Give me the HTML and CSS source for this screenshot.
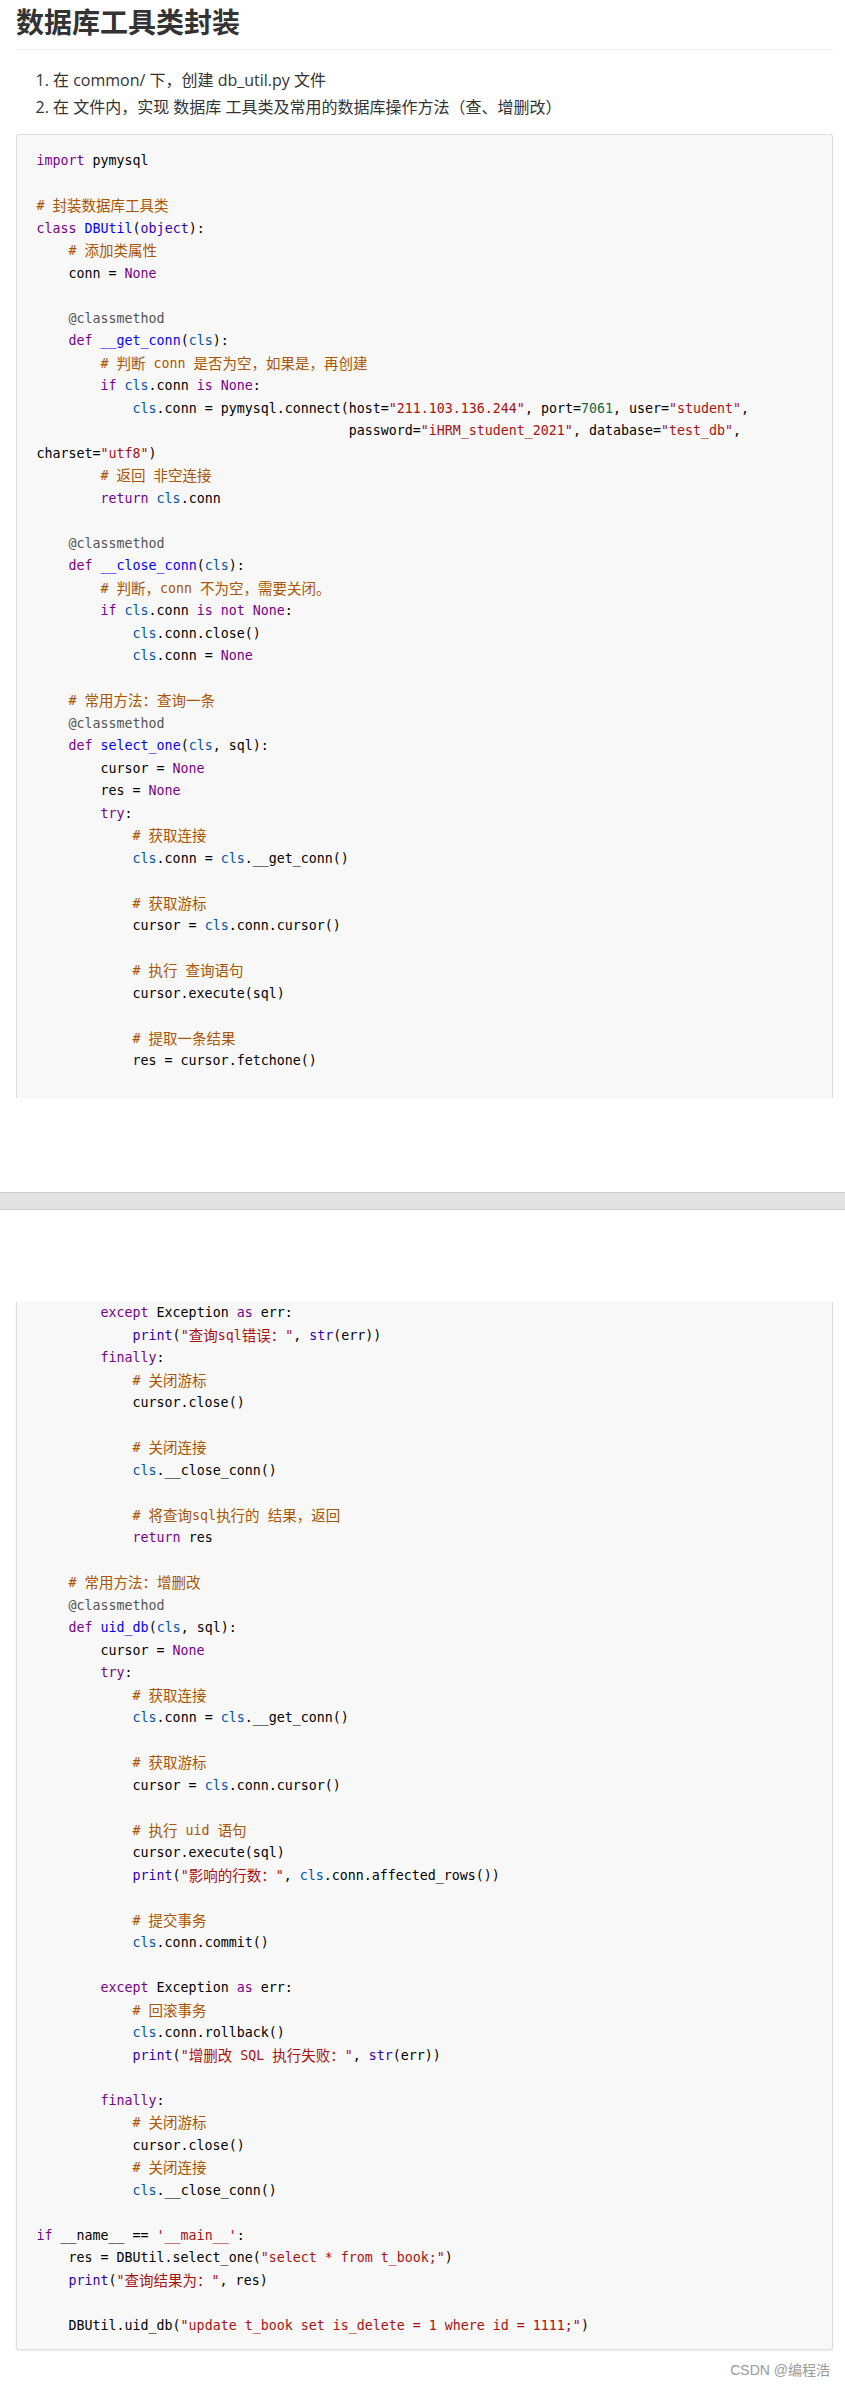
FILE: index.html
```html
<!DOCTYPE html>
<html lang="zh-CN">
<head>
    <meta charset="UTF-8">
    <meta name="viewport" content="width=device-width, initial-scale=1.0">
    <title>数据库工具类封装</title>
    <link rel="stylesheet" href="styles.css">
</head>
<body>
    <div class="sheet">
        <h2>数据库工具类封装</h2>
        <ol class="steps">
            <li>在 common/ 下，创建 db_util.py 文件</li>
            <li>在 文件内，实现 数据库 工具类及常用的数据库操作方法（查、增删改）</li>
        </ol>
        <div class="code code-top">
<div class="ln"><span class="k">import</span> pymysql</div>
<div class="ln"></div>
<div class="ln"><span class="c"># <span class="z">封装数据库工具类</span></span></div>
<div class="ln"><span class="k">class</span> <span class="d">DBUtil</span>(<span class="b">object</span>):</div>
<div class="ln">    <span class="c"># <span class="z">添加类属性</span></span></div>
<div class="ln">    conn = <span class="k">None</span></div>
<div class="ln"></div>
<div class="ln">    <span class="m">@classmethod</span></div>
<div class="ln">    <span class="k">def</span> <span class="d">__get_conn</span>(<span class="v">cls</span>):</div>
<div class="ln">        <span class="c"># <span class="z">判断</span> conn <span class="z">是否为空，如果是，再创建</span></span></div>
<div class="ln">        <span class="k">if</span> <span class="v">cls</span>.conn <span class="k">is</span> <span class="k">None</span>:</div>
<div class="ln">            <span class="v">cls</span>.conn = pymysql.connect(host=<span class="s">"211.103.136.244"</span>, port=<span class="n">7061</span>, user=<span class="s">"student"</span>,</div>
<div class="ln">                                       password=<span class="s">"iHRM_student_2021"</span>, database=<span class="s">"test_db"</span>,</div>
<div class="ln">charset=<span class="s">"utf8"</span>)</div>
<div class="ln">        <span class="c"># <span class="z">返回</span> <span class="z">非空连接</span></span></div>
<div class="ln">        <span class="k">return</span> <span class="v">cls</span>.conn</div>
<div class="ln"></div>
<div class="ln">    <span class="m">@classmethod</span></div>
<div class="ln">    <span class="k">def</span> <span class="d">__close_conn</span>(<span class="v">cls</span>):</div>
<div class="ln">        <span class="c"># <span class="z">判断，</span>conn <span class="z">不为空，需要关闭。</span></span></div>
<div class="ln">        <span class="k">if</span> <span class="v">cls</span>.conn <span class="k">is</span> <span class="k">not</span> <span class="k">None</span>:</div>
<div class="ln">            <span class="v">cls</span>.conn.close()</div>
<div class="ln">            <span class="v">cls</span>.conn = <span class="k">None</span></div>
<div class="ln"></div>
<div class="ln">    <span class="c"># <span class="z">常用方法：查询一条</span></span></div>
<div class="ln">    <span class="m">@classmethod</span></div>
<div class="ln">    <span class="k">def</span> <span class="d">select_one</span>(<span class="v">cls</span>, sql):</div>
<div class="ln">        cursor = <span class="k">None</span></div>
<div class="ln">        res = <span class="k">None</span></div>
<div class="ln">        <span class="k">try</span>:</div>
<div class="ln">            <span class="c"># <span class="z">获取连接</span></span></div>
<div class="ln">            <span class="v">cls</span>.conn = <span class="v">cls</span>.__get_conn()</div>
<div class="ln"></div>
<div class="ln">            <span class="c"># <span class="z">获取游标</span></span></div>
<div class="ln">            cursor = <span class="v">cls</span>.conn.cursor()</div>
<div class="ln"></div>
<div class="ln">            <span class="c"># <span class="z">执行</span> <span class="z">查询语句</span></span></div>
<div class="ln">            cursor.execute(sql)</div>
<div class="ln"></div>
<div class="ln">            <span class="c"># <span class="z">提取一条结果</span></span></div>
<div class="ln">            res = cursor.fetchone()</div>
        </div>
    </div>

    <div class="pagebreak"></div>

    <div class="sheet">
        <div class="code code-bottom">
<div class="ln">        <span class="k">except</span> Exception <span class="k">as</span> err:</div>
<div class="ln">            <span class="b">print</span>(<span class="s">"<span class="z">查询</span>sql<span class="z">错误：</span>"</span>, <span class="b">str</span>(err))</div>
<div class="ln">        <span class="k">finally</span>:</div>
<div class="ln">            <span class="c"># <span class="z">关闭游标</span></span></div>
<div class="ln">            cursor.close()</div>
<div class="ln"></div>
<div class="ln">            <span class="c"># <span class="z">关闭连接</span></span></div>
<div class="ln">            <span class="v">cls</span>.__close_conn()</div>
<div class="ln"></div>
<div class="ln">            <span class="c"># <span class="z">将查询</span>sql<span class="z">执行的</span> <span class="z">结果，返回</span></span></div>
<div class="ln">            <span class="k">return</span> res</div>
<div class="ln"></div>
<div class="ln">    <span class="c"># <span class="z">常用方法：增删改</span></span></div>
<div class="ln">    <span class="m">@classmethod</span></div>
<div class="ln">    <span class="k">def</span> <span class="d">uid_db</span>(<span class="v">cls</span>, sql):</div>
<div class="ln">        cursor = <span class="k">None</span></div>
<div class="ln">        <span class="k">try</span>:</div>
<div class="ln">            <span class="c"># <span class="z">获取连接</span></span></div>
<div class="ln">            <span class="v">cls</span>.conn = <span class="v">cls</span>.__get_conn()</div>
<div class="ln"></div>
<div class="ln">            <span class="c"># <span class="z">获取游标</span></span></div>
<div class="ln">            cursor = <span class="v">cls</span>.conn.cursor()</div>
<div class="ln"></div>
<div class="ln">            <span class="c"># <span class="z">执行</span> uid <span class="z">语句</span></span></div>
<div class="ln">            cursor.execute(sql)</div>
<div class="ln">            <span class="b">print</span>(<span class="s">"<span class="z">影响的行数：</span>"</span>, <span class="v">cls</span>.conn.affected_rows())</div>
<div class="ln"></div>
<div class="ln">            <span class="c"># <span class="z">提交事务</span></span></div>
<div class="ln">            <span class="v">cls</span>.conn.commit()</div>
<div class="ln"></div>
<div class="ln">        <span class="k">except</span> Exception <span class="k">as</span> err:</div>
<div class="ln">            <span class="c"># <span class="z">回滚事务</span></span></div>
<div class="ln">            <span class="v">cls</span>.conn.rollback()</div>
<div class="ln">            <span class="b">print</span>(<span class="s">"<span class="z">增删改</span> SQL <span class="z">执行失败：</span>"</span>, <span class="b">str</span>(err))</div>
<div class="ln"></div>
<div class="ln">        <span class="k">finally</span>:</div>
<div class="ln">            <span class="c"># <span class="z">关闭游标</span></span></div>
<div class="ln">            cursor.close()</div>
<div class="ln">            <span class="c"># <span class="z">关闭连接</span></span></div>
<div class="ln">            <span class="v">cls</span>.__close_conn()</div>
<div class="ln"></div>
<div class="ln"><span class="k">if</span> __name__ == <span class="s">'__main__'</span>:</div>
<div class="ln">    res = DBUtil.select_one(<span class="s">"select * from t_book;"</span>)</div>
<div class="ln">    <span class="b">print</span>(<span class="s">"<span class="z">查询结果为：</span>"</span>, res)</div>
<div class="ln"></div>
<div class="ln">    DBUtil.uid_db(<span class="s">"update t_book set is_delete = 1 where id = 1111;"</span>)</div>
        </div>
    </div>

    <div class="watermark">CSDN @编程浩</div>
</body>
</html>
```

FILE: styles.css
```css
body {
    margin: 0;
    background-color: #ffffff;
    font-family: "Open Sans", "Noto Sans CJK SC", sans-serif;
    color: #333333;
}

.sheet {
    width: 817px;
    margin-left: 16px;
}

h2 {
    margin: 0;
    padding: 5px 0 10px;
    font-size: 28px;
    line-height: 34px;
    font-weight: bold;
    border-bottom: 1px solid #eeeeee;
}

.steps {
    margin: 17px 0 14px;
    padding-left: 37px;
    font-size: 16px;
    line-height: 26.5px;
}

/* code blocks (codemirror default colours) */
.code {
    background-color: #f8f8f8;
    border: 1px solid #dddddd;
    font-family: "DejaVu Sans Mono", "Noto Sans CJK SC", monospace;
    font-size: 13.3px;
    color: #000000;
}

.code .ln {
    height: 22.5px;
    line-height: 22.5px;
    white-space: pre;
}

.code-top {
    border-bottom: none;
    border-radius: 3px 3px 0 0;
    padding: 15px 0 25.5px 19.5px;
}

.code-bottom {
    border-top: none;
    border-radius: 0 0 3px 3px;
    padding: 0 0 12px 19.5px;
    box-shadow: 0 1px 2px rgba(0, 0, 0, 0.08);
}

.code .k { color: #770088; }
.code .d { color: #0000ff; }
.code .v { color: #0055aa; }
.code .b { color: #3300aa; }
.code .n { color: #116644; }
.code .s { color: #aa1111; }
.code .c { color: #aa5500; }
.code .m { color: #555555; }

.code .z {
    font-family: "Noto Sans CJK SC", sans-serif;
    font-size: 14.5px;
    line-height: 1;
    vertical-align: -1px;
}

.pagebreak {
    margin: 94px 0 92px;
    height: 16px;
    background-color: #e2e2e2;
    border-top: 1px solid #c9c9c9;
    border-bottom: 1px solid #d0d0d0;
}

.watermark {
    margin-top: 11px;
    padding-right: 15px;
    text-align: right;
    font-family: "Liberation Sans", "Noto Sans CJK SC", sans-serif;
    font-size: 14px;
    line-height: 18px;
    color: #9a9a9a;
}
```
